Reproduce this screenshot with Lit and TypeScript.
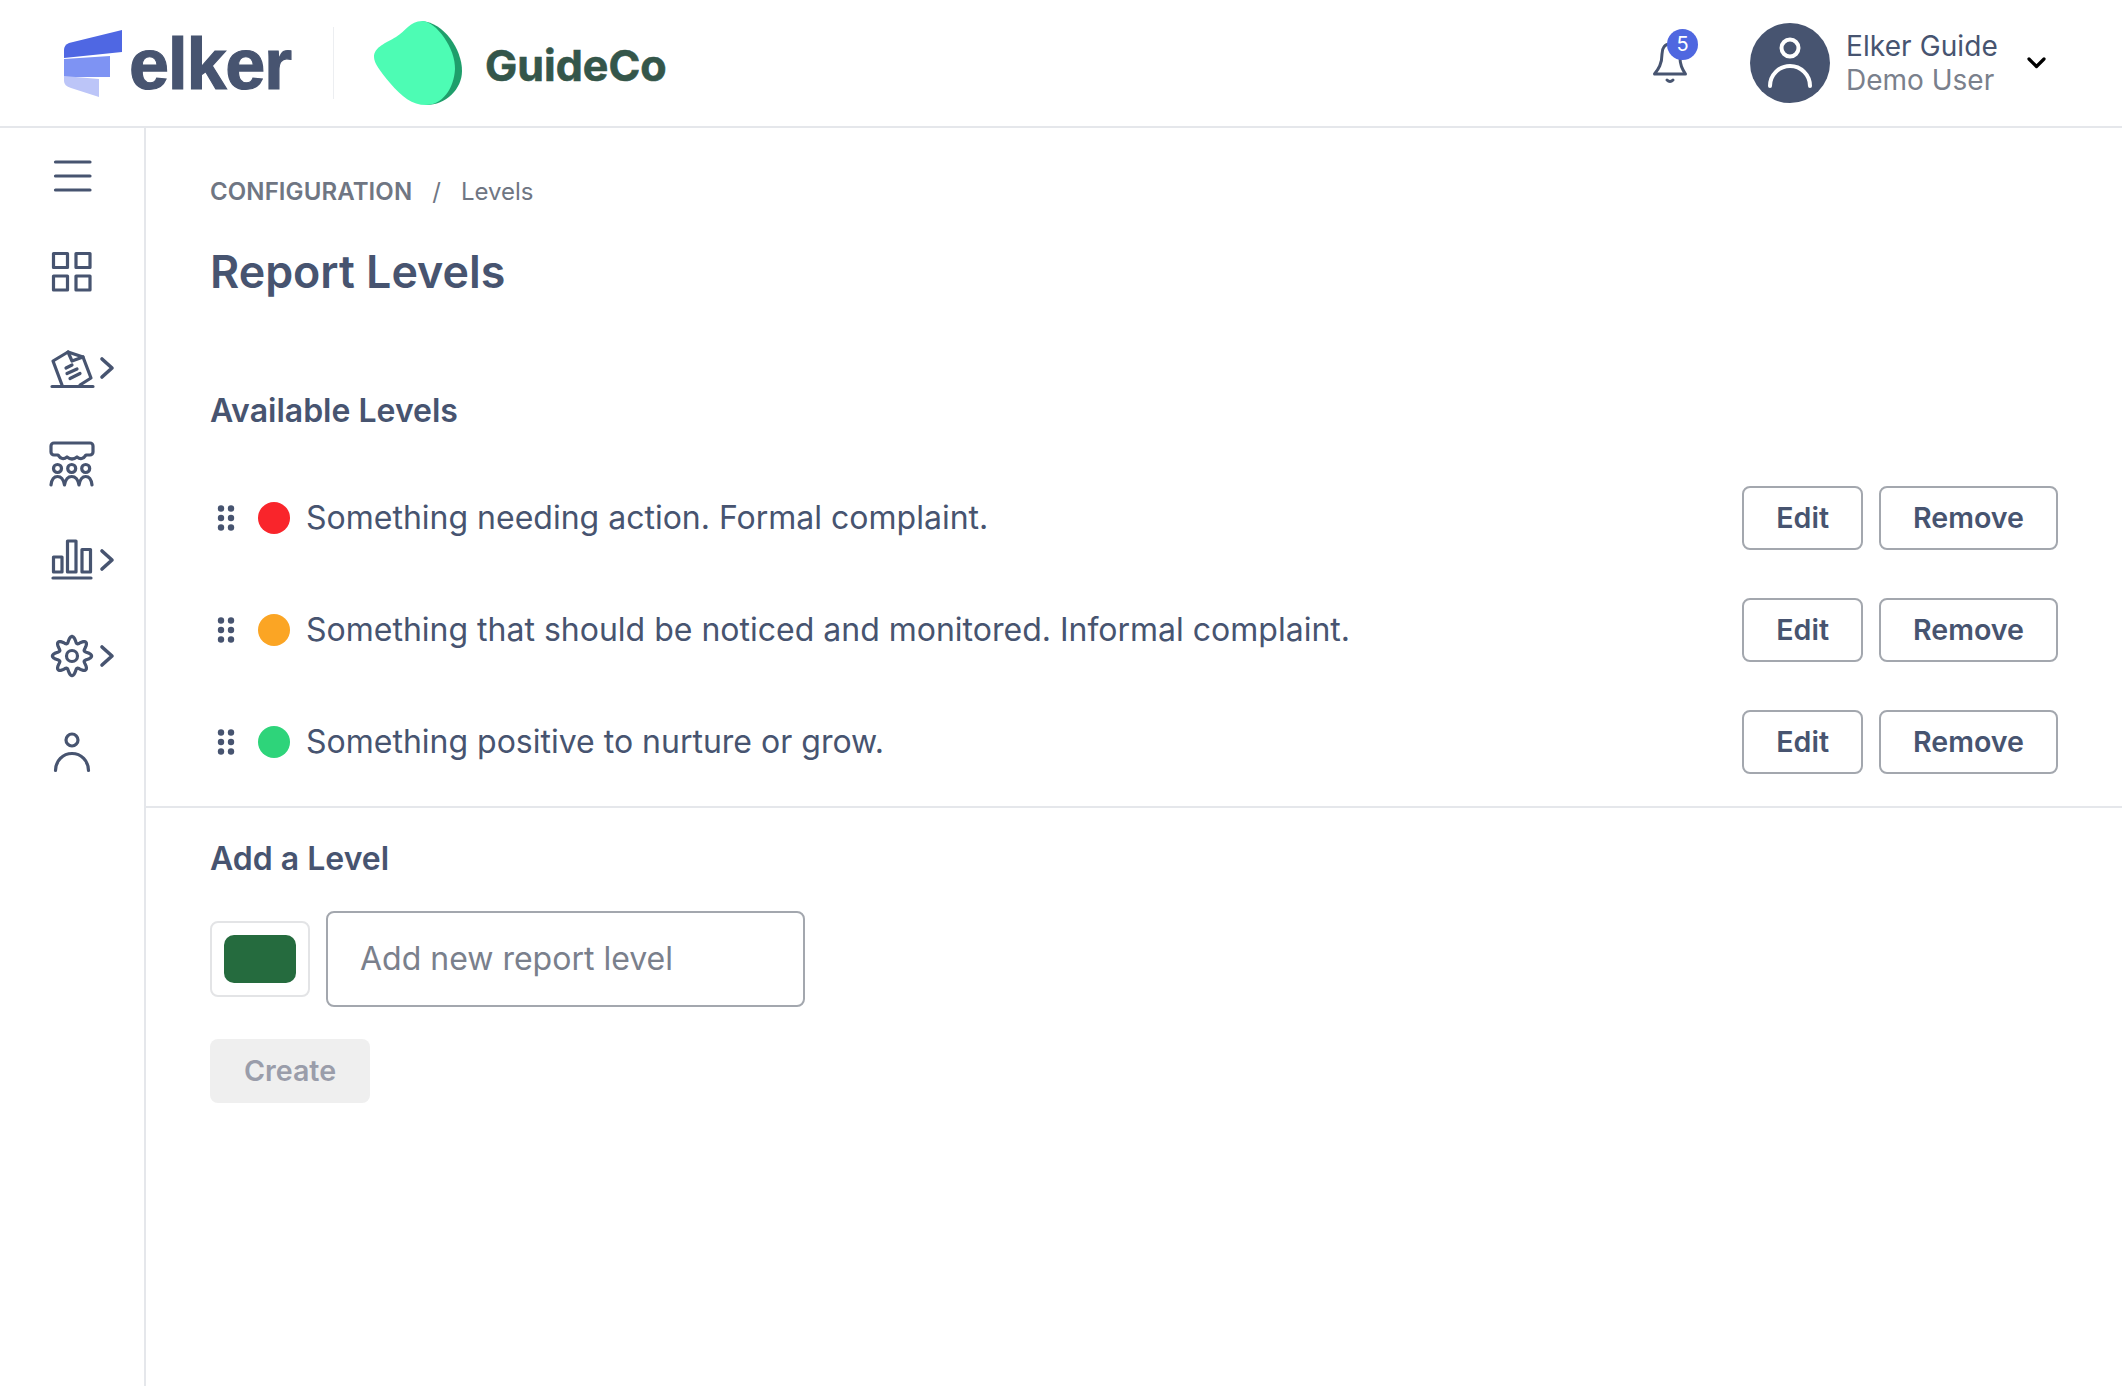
import { LitElement, html, css, svg } from 'lit';
import { customElement } from 'lit/decorators.js';

const levels = [
  { color: '#f9252b', label: 'Something needing action. Formal complaint.' },
  { color: '#fba524', label: 'Something that should be noticed and monitored. Informal complaint.' },
  { color: '#2ed47a', label: 'Something positive to nurture or grow.' },
];

// wavy 8 tooth outline for the settings icon
function gearPath() {
  const pts: string[] = [];
  for (let i = 0; i < 120; i++) {
    const a = (i / 120) * Math.PI * 2;
    const r = 16.4 + 3.2 * Math.cos(8 * a);
    pts.push(`${(24 + r * Math.sin(a)).toFixed(2)} ${(24 - r * Math.cos(a)).toFixed(2)}`);
  }
  return 'M' + pts.join('L') + 'Z';
}

const navIcons = [
  { arrow: false, body: svg`<path d="M7.5 10H42M7.5 24H42M7.5 38H42"/>` },
  {
    arrow: false,
    body: svg`<rect x="5.5" y="5.5" width="14" height="14"/><rect x="28" y="5.5" width="14" height="14"/><rect x="5.5" y="28" width="14" height="14"/><rect x="28" y="28" width="14" height="14"/>`,
  },
  {
    arrow: true,
    body: svg`<path d="M14 41L5 17L20 8L35 13L43 34L32 41"/><path d="M20 8L24 17L35 13"/><path d="M18 24L24 21M19 29.5L29 25M22 34.5L32 29.5M4 42.5H45"/>`,
  },
  {
    arrow: false,
    body: svg`<path d="M6 3H42a3 3 0 0 1 3 3V12a3 3 0 0 1-3 3H38Q34 21 29 17Q24 21 19 17Q14 21 10 15H6a3 3 0 0 1-3-3V6a3 3 0 0 1 3-3Z"/><circle cx="9.5" cy="28.5" r="4"/><circle cx="23.7" cy="28.5" r="4"/><circle cx="37.7" cy="28.5" r="4"/><path d="M3 45Q4 36.5 9.5 36.5Q15 36.5 16.5 45Q18 36.5 23.7 36.5Q29.5 36.5 31 45Q32.5 36.5 37.7 36.5Q43 36.5 44 45"/>`,
  },
  {
    arrow: true,
    body: svg`<rect x="5.5" y="21" width="8.5" height="15"/><rect x="19.5" y="5" width="8.5" height="31"/><rect x="34" y="13.5" width="8.5" height="22.5"/><path d="M5 42H43"/>`,
  },
  {
    arrow: true,
    body: svg`<path d=${gearPath()}/><circle cx="24" cy="24" r="5.5"/>`,
  },
  {
    arrow: false,
    body: svg`<circle cx="24" cy="12" r="6"/><path d="M7.5 42.5a16.5 17 0 0 1 33 0"/>`,
  },
];

@customElement('app-root')
export class AppRoot extends LitElement {
  static styles = css`
    :host {
      display: block;
      min-height: 1386px;
      background: #fff;
      color: #475470;
      font-family: 'Inter', 'Liberation Sans', sans-serif;
    }

    .header {
      height: 126px;
      border-bottom: 2px solid #e5e7eb;
      display: flex;
      align-items: center;
      padding: 0 76px 0 62px;
    }

    .elker-mark {
      width: 60px;
      height: 67px;
      margin-right: 7px;
      flex: none;
    }

    .elker-name {
      font-family: 'Liberation Sans', sans-serif;
      font-size: 72px;
      font-weight: 700;
      letter-spacing: -1.3px;
      line-height: 72px;
      color: #475470;
      -webkit-text-stroke: 1.2px #475470;
      width: 163px;
      margin-top: 2px;
    }

    .logo-divider {
      width: 1px;
      height: 72px;
      background: #eceef1;
      margin: 0 40px 0 41px;
    }

    .blob {
      width: 88px;
      height: 84px;
      flex: none;
      margin-right: 23px;
    }

    .company {
      font-size: 43px;
      font-weight: 700;
      color: #34564a;
      -webkit-text-stroke: 0.6px #34564a;
      margin-top: 3px;
    }

    .bell {
      position: relative;
      width: 48px;
      height: 48px;
      margin-left: auto;
      margin-right: 56px;
      margin-top: 2px;
    }

    .bell svg {
      display: block;
      fill: none;
      stroke: #475470;
      stroke-width: 3;
      stroke-linecap: round;
      stroke-linejoin: round;
    }

    .badge {
      position: absolute;
      left: 21px;
      top: -11px;
      width: 31px;
      height: 31px;
      border-radius: 50%;
      background: #4f67e0;
      color: #fff;
      font-size: 20px;
      line-height: 31px;
      text-align: center;
    }

    .avatar {
      width: 80px;
      height: 80px;
      flex: none;
      margin-right: 16px;
    }

    .user {
      display: flex;
      flex-direction: column;
      width: 181px;
      font-size: 28px;
      line-height: 34px;
      letter-spacing: 0.1px;
    }

    .user-role {
      color: #7a808c;
      letter-spacing: 0;
    }

    .caret {
      width: 19px;
      height: 12px;
      flex: none;
    }

    .body {
      display: grid;
      grid-template-columns: 146px 1fr;
      min-height: 1258px;
    }

    .sidebar {
      border-right: 2px solid #e5e7eb;
      padding-top: 24px;
      display: flex;
      flex-direction: column;
      gap: 48px;
    }

    .nav-item {
      display: flex;
      align-items: center;
      height: 48px;
      padding-left: 48px;
    }

    .nav-item svg {
      display: block;
      fill: none;
      stroke: #475470;
      stroke-width: 3.2;
      stroke-linecap: round;
      stroke-linejoin: round;
    }

    .nav-item .nav-arrow {
      margin-left: 3px;
      stroke-width: 3.6;
    }

    .top {
      padding: 47px 64px 0;
    }

    .crumbs {
      display: flex;
      align-items: center;
      font-size: 24px;
      line-height: 32px;
      color: #6f7683;
      margin-top: 1px;
      margin-bottom: -1px;
    }

    .crumb-root {
      font-weight: 600;
      letter-spacing: 0.1px;
    }

    .crumb-sep {
      margin: 0 20px;
    }

    h1 {
      margin: 37px 0 0;
      font-size: 44.8px;
      line-height: 56px;
      font-weight: 600;
    }

    h2 {
      margin: 0;
      font-size: 32px;
      line-height: 40px;
      font-weight: 600;
    }

    .available {
      margin-top: 91px;
    }

    .levels {
      padding-top: 31px;
    }

    .level {
      height: 112px;
      display: flex;
      align-items: center;
    }

    .grip {
      width: 18px;
      height: 26px;
      margin-left: 7px;
      margin-right: 23px;
      fill: #475470;
      flex: none;
    }

    .dot {
      width: 32px;
      height: 32px;
      border-radius: 50%;
      margin-right: 16px;
      flex: none;
    }

    .level-name {
      flex: 1;
      font-size: 32px;
      margin-bottom: 2px;
    }

    .actions {
      display: flex;
      gap: 16px;
    }

    button {
      height: 64px;
      padding: 0 32px 2px;
      box-sizing: border-box;
      border: 2px solid #a3a7ae;
      border-radius: 8px;
      background: #fff;
      color: #475470;
      font-family: inherit;
      font-size: 28.6px;
      font-weight: 600;
    }

    .add {
      margin-top: 8px;
      border-top: 2px solid #e5e7eb;
      padding: 31px 64px 0;
    }

    .add-row {
      display: flex;
      align-items: center;
      gap: 16px;
      margin-top: 32px;
    }

    .swatch {
      width: 100px;
      height: 76px;
      box-sizing: border-box;
      border: 2px solid #e3e4e6;
      border-radius: 8px;
      display: flex;
      align-items: center;
      justify-content: center;
    }

    .swatch-fill {
      width: 72px;
      height: 48px;
      border-radius: 10px;
      background: #256b3e;
    }

    input {
      width: 479px;
      height: 96px;
      box-sizing: border-box;
      padding: 0 32px 2px;
      border: 2px solid #a3a7ae;
      border-radius: 8px;
      font-family: inherit;
      font-size: 32px;
      color: #475470;
      outline: none;
    }

    input::placeholder {
      color: #7a808c;
      opacity: 1;
    }

    .create {
      display: block;
      margin-top: 32px;
      width: 160px;
      padding: 0 0 2px;
      border: none;
      background: #efefef;
      color: #9a9daa;
    }
  `;

  renderHeader() {
    return html`
      <header class="header">
        <svg class="elker-mark" viewBox="0 0 60 67">
          <path fill="#4f67e3" d="M60 0V22L2 28V20Q2 15 7 13Z" />
          <path fill="#7e93f3" d="M2 29L48 26V47H2Z" />
          <path fill="#bcc5f8" d="M2 46L37 49V67L9 58Q2 56 2 51Z" />
        </svg>
        <span class="elker-name">elker</span>
        <span class="logo-divider"></span>
        <svg class="blob" viewBox="0 0 88 84">
          <path fill="#1f9e6b" d="M48 0C70 2 88 28 88 50C88 68 72 84 52 84Z" />
          <path
            fill="#4dfcb4"
            d="M48 0C62 0 82 28 81 48C80 68 68 84 52 84C38 84 28 76 16 62C6 50 0 42 0 36C0 26 12 22 22 16C32 10 36 0 48 0Z"
          />
        </svg>
        <span class="company">GuideCo</span>
        <div class="bell">
          <svg width="48" height="48" viewBox="0 0 48 48">
            <path d="M8.5 34H39.5C36 29 34 25 34 18C34 9 29 4 24 4C19 4 16 8 16 14C16 24 12.5 29 8.5 34Z" />
            <path d="M21 40Q24 43 27 40" />
          </svg>
          <span class="badge">5</span>
        </div>
        <svg class="avatar" viewBox="0 0 80 80">
          <circle cx="40" cy="40" r="40" fill="#475470" />
          <circle cx="40" cy="25" r="8.5" fill="none" stroke="#fff" stroke-width="4" />
          <path d="M20 63a20 20 0 0 1 40 0" fill="none" stroke="#fff" stroke-width="4" stroke-linecap="round" />
        </svg>
        <div class="user">
          <span>Elker Guide</span>
          <span class="user-role">Demo User</span>
        </div>
        <svg class="caret" viewBox="0 0 19 12">
          <path d="M2 2L9.5 9.5L17 2" fill="none" stroke="#000" stroke-width="3.2" stroke-linecap="round" stroke-linejoin="round" />
        </svg>
      </header>
    `;
  }

  renderSidebar() {
    return html`
      <nav class="sidebar">
        ${navIcons.map(
          (item) => html`
            <div class="nav-item">
              <svg width="48" height="48" viewBox="0 0 48 48">${item.body}</svg>
              ${item.arrow
                ? html`<svg class="nav-arrow" width="16" height="24" viewBox="0 0 16 24">
                    <path d="M3 3L13 12L3 21" />
                  </svg>`
                : ''}
            </div>
          `,
        )}
      </nav>
    `;
  }

  render() {
    return html`
      ${this.renderHeader()}
      <div class="body">
        ${this.renderSidebar()}
        <main>
          <section class="top">
            <div class="crumbs">
              <span class="crumb-root">CONFIGURATION</span>
              <span class="crumb-sep">/</span>
              <span>Levels</span>
            </div>
            <h1>Report Levels</h1>
            <h2 class="available">Available Levels</h2>
            <div class="levels">
              ${levels.map(
                (level) => html`
                  <div class="level">
                    <svg class="grip" viewBox="0 0 18 26">
                      <circle cx="4" cy="3.5" r="3.2" /><circle cx="14" cy="3.5" r="3.2" />
                      <circle cx="4" cy="13" r="3.2" /><circle cx="14" cy="13" r="3.2" />
                      <circle cx="4" cy="22.5" r="3.2" /><circle cx="14" cy="22.5" r="3.2" />
                    </svg>
                    <span class="dot" style="background:${level.color}"></span>
                    <span class="level-name">${level.label}</span>
                    <div class="actions">
                      <button>Edit</button>
                      <button>Remove</button>
                    </div>
                  </div>
                `,
              )}
            </div>
          </section>
          <section class="add">
            <h2>Add a Level</h2>
            <div class="add-row">
              <div class="swatch"><div class="swatch-fill"></div></div>
              <input placeholder="Add new report level" />
            </div>
            <button class="create" disabled>Create</button>
          </section>
        </main>
      </div>
    `;
  }
}
